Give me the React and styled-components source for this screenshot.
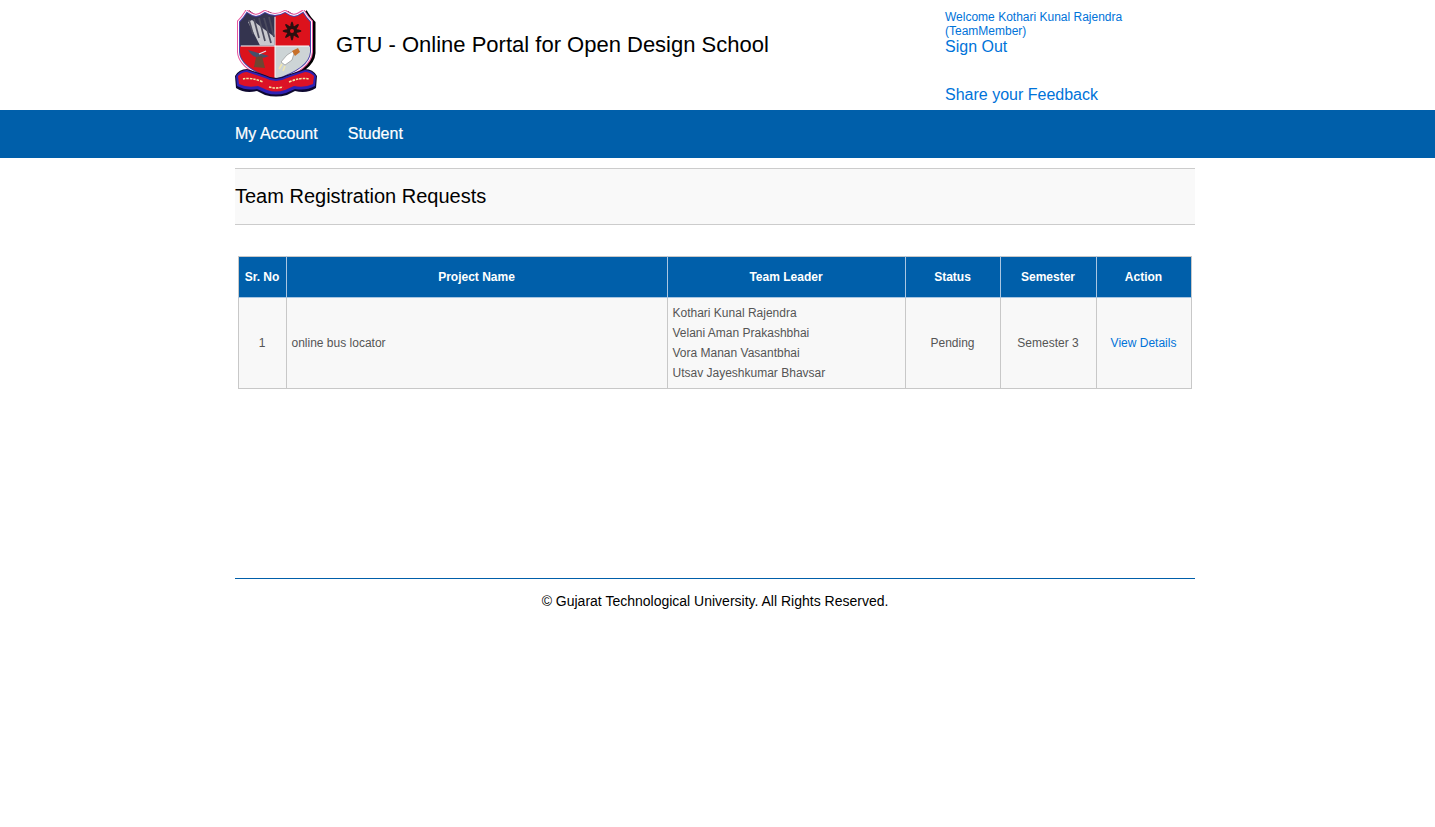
import React from "react";
import styled, { createGlobalStyle } from "styled-components";

const GlobalStyle = createGlobalStyle`
  html, body {
    margin: 0;
    padding: 0;
    background: #fff;
    font-family: "Liberation Sans", Arial, sans-serif;
  }
`;

const Container = styled.div`
  width: 960px;
  margin-left: 235px;
  box-sizing: border-box;
`;

const HeaderInner = styled(Container)`
  height: 110px;
  display: flex;
`;

const LogoBox = styled.div`
  width: 82px;
  padding-top: 10px;
  flex-shrink: 0;
`;

const SiteTitle = styled.h1`
  width: 609px;
  margin: 0;
  padding: 32px 0 0 19px;
  box-sizing: content-box;
  font-size: 22px;
  line-height: 26px;
  font-weight: 400;
  color: #000;
`;

const UserPanel = styled.div`
  padding-top: 10px;
  width: 250px;
  color: #0073d9;
`;

const Welcome = styled.div`
  font-size: 12px;
  line-height: 14px;
`;

const PanelLink = styled.a`
  display: block;
  color: #0073d9;
  font-size: 16px;
  line-height: 18px;
  margin-top: ${(p) => p.$gap || 0}px;
  text-decoration: none;
`;

const NavBar = styled.nav`
  height: 48px;
  background: #005faa;
`;

const NavList = styled(Container)`
  display: flex;
  align-items: center;
  gap: 30px;
  height: 100%;
`;

const NavItem = styled.a`
  color: #fff;
  font-size: 16px;
  font-weight: 400;
  text-decoration: none;
  -webkit-text-stroke: 0.2px #fff;
`;

const PageHeading = styled.h2`
  margin: 10px 0 0;
  height: 55px;
  line-height: 55px;
  background: #f9f9f9;
  border-top: 1px solid #ccc;
  border-bottom: 1px solid #ccc;
  font-size: 20px;
  font-weight: 400;
  color: #000;
`;

const TableWrap = styled.div`
  padding: 31px 3px 0;
  min-height: 353px;
  box-sizing: border-box;
`;

const Table = styled.table`
  width: 953px;
  table-layout: fixed;
  border-collapse: collapse;
  font-size: 12px;
`;

const HeadCell = styled.th`
  box-sizing: border-box;
  width: ${(p) => p.$w}px;
  height: 41px;
  padding: 0 1px 0 0;
  background: #005faa;
  color: #fff;
  font-weight: 700;
  text-align: center;
  border: 1px solid #a9c6e2;
  border-top-color: #c8c8c8;
  &:first-child {
    border-left-color: #c8c8c8;
  }
  &:last-child {
    border-right-color: #c8c8c8;
  }
`;

const Cell = styled.td`
  background: #f8f8f8;
  color: #555;
  border: 1px solid #c8c8c8;
  padding: 5px 4px 5px ${(p) => (p.$align === "left" ? 4.5 : 3)}px;
  text-align: ${(p) => p.$align || "center"};
  line-height: 20px;
  vertical-align: middle;
`;

const DetailsLink = styled.a`
  color: #0073d9;
  text-decoration: none;
`;

const Footer = styled(Container)`
  border-top: 1px solid #005faa;
  padding-top: 14px;
  text-align: center;
  font-size: 14px;
  line-height: 16px;
  color: #000;
`;

const SHIELD =
  "M5 12 Q9 8 12 3 Q16 6 21 7 Q26 6 30 3 Q35 6 40 6 Q45 6 50 3 Q54 6 59 7 Q64 6 68 3 Q71 8 75 12 L75 42 Q74 58 40 69 Q6 58 5 42 Z";

function Logo() {
  return (
    <svg width="82" height="87" viewBox="0 0 82 87" aria-label="GTU logo">
      <defs>
        <clipPath id="shieldClip">
          <path d={SHIELD} />
        </clipPath>
      </defs>
      {/* layered shield edge */}
      <path d={SHIELD} transform="translate(3 1)" fill="#000" stroke="#000" strokeWidth="5" />
      <path d={SHIELD} fill="#fff" stroke="#e8569f" strokeWidth="6" />
      <path d={SHIELD} fill="#fff" stroke="#fff" strokeWidth="4" />
      <path d={SHIELD} fill="#fff" stroke="#4a3fa8" strokeWidth="2" />
      <g clipPath="url(#shieldClip)">
        {/* quadrants */}
        <rect x="0" y="0" width="39.5" height="35.5" fill="#34344f" />
        <rect x="40.5" y="0" width="40" height="35.5" fill="#dc121c" />
        <rect x="0" y="36.5" width="39.5" height="40" fill="#dc121c" />
        <rect x="40.5" y="36.5" width="40" height="40" fill="#cdd4d6" />
        {/* dam */}
        <path d="M13 12 L17 10 L39.5 27 L39.5 35.5 L25 35.5 Z" fill="#c9c9cf" />
        <g stroke="#4b4b5e" strokeWidth="1.7">
          <path d="M14 10 L18 24" />
          <path d="M19 9 L24 28" />
          <path d="M24 8 L30 31" />
          <path d="M29 8 L36 33" />
          <path d="M34 7 L39 27" />
        </g>
      </g>
      {/* emblem */}
      <g fill="#2a1010">
        <circle cx="57" cy="21" r="5" />
        <ellipse cx="57" cy="21" rx="9.5" ry="2" />
        <ellipse cx="57" cy="21" rx="9.5" ry="2" transform="rotate(45 57 21)" />
        <ellipse cx="57" cy="21" rx="9.5" ry="2" transform="rotate(90 57 21)" />
        <ellipse cx="57" cy="21" rx="9.5" ry="2" transform="rotate(135 57 21)" />
      </g>
      <circle cx="57" cy="21" r="2" fill="#dc121c" />
      {/* dish */}
      <path d="M13 40 Q20 52 34 46 Z" fill="#46506a" />
      <path d="M21 47 L19 57 L30 58 L27 46 Z" fill="#6e4632" />
      <path d="M24 44 L31 41" stroke="#dfe4ea" strokeWidth="1.2" />
      {/* shuttle */}
      <path d="M60 40 L52 45 L46 52 L50 55 L57 50 Z" fill="#fff" stroke="#888" strokeWidth="0.6" />
      <path d="M63 38 L57 41 L60 46 L65 42 Z" fill="#c8702a" />
      <path d="M47 54 L44 59 M50 56 L48 61" stroke="#f0e6b0" strokeWidth="1.6" />
      {/* ribbon */}
      <path d="M0 66 Q4 59 12 59 L30 65 Q41 71 52 65 L70 59 Q78 59 82 66 L81 78 Q72 84 60 81 L52 85 Q41 88 30 85 L22 81 Q10 84 1 78 Z" fill="#0e0830" />
      <path d="M1 66 Q5 60 12 60 L30 66 Q41 72 52 66 L70 60 Q77 60 81 66 L80 76 Q71 81 60 79 L51 83 Q41 86 31 83 L22 79 Q11 81 2 76 Z" fill="#2f22b4" />
      <path d="M3 66 Q7 62 12 62 L30 68 Q41 74 52 68 L70 62 Q75 62 79 66 L78 74 Q70 78 59 76 L50 80 Q41 83 32 80 L23 76 Q12 78 4 74 Z" fill="#dc1226" />
      <g fill="none" stroke="#f6e6a0" strokeWidth="1.6" strokeDasharray="2.5 1">
        <path d="M8 69 Q16 67 28 72" />
        <path d="M34 77 Q41 79 48 77" />
        <path d="M54 72 Q66 67 74 69" />
      </g>
    </svg>
  );
}

const columns = [
  { label: "Sr. No", w: 48 },
  { label: "Project Name", w: 381 },
  { label: "Team Leader", w: 238 },
  { label: "Status", w: 95 },
  { label: "Semester", w: 96 },
  { label: "Action", w: 95 },
];

const members = [
  "Kothari Kunal Rajendra",
  "Velani Aman Prakashbhai",
  "Vora Manan Vasantbhai",
  "Utsav Jayeshkumar Bhavsar",
];

export default function App() {
  return (
    <>
      <GlobalStyle />
      <HeaderInner as="header">
        <LogoBox>
          <Logo />
        </LogoBox>
        <SiteTitle>GTU - Online Portal for Open Design School</SiteTitle>
        <UserPanel>
          <Welcome>
            Welcome Kothari Kunal Rajendra
            <br />
            (TeamMember)
          </Welcome>
          <PanelLink href="#">Sign Out</PanelLink>
          <PanelLink href="#" $gap={30}>
            Share your Feedback
          </PanelLink>
        </UserPanel>
      </HeaderInner>
      <NavBar>
        <NavList>
          <NavItem href="#">My Account</NavItem>
          <NavItem href="#">Student</NavItem>
        </NavList>
      </NavBar>
      <Container as="main">
        <PageHeading>Team Registration Requests</PageHeading>
        <TableWrap>
          <Table>
            <thead>
              <tr>
                {columns.map((c) => (
                  <HeadCell key={c.label} $w={c.w}>
                    {c.label}
                  </HeadCell>
                ))}
              </tr>
            </thead>
            <tbody>
              <tr>
                <Cell>1</Cell>
                <Cell $align="left">online bus locator</Cell>
                <Cell $align="left">
                  {members.map((m) => (
                    <div key={m}>{m}</div>
                  ))}
                </Cell>
                <Cell>Pending</Cell>
                <Cell>Semester 3</Cell>
                <Cell>
                  <DetailsLink href="#">View Details</DetailsLink>
                </Cell>
              </tr>
            </tbody>
          </Table>
        </TableWrap>
      </Container>
      <Footer as="footer">© Gujarat Technological University. All Rights Reserved.</Footer>
    </>
  );
}
